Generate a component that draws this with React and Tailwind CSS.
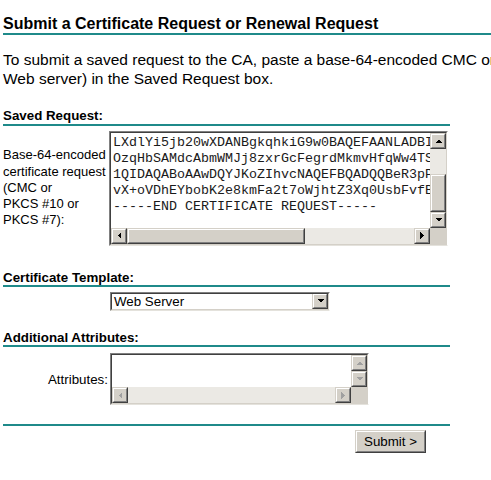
const teal = 'border-[#1f8a8a]'

function Arrow({ dir, disabled }) {
  const fill = disabled ? '#a0a0a0' : '#000'
  if (dir === 'up' || dir === 'down') {
    const pts = dir === 'up' ? '0,4 7,4 3.5,0.5' : '0,0 7,0 3.5,3.5'
    return (
      <svg width="7" height="4" viewBox="0 0 7 4" shapeRendering="crispEdges">
        <polygon points={pts} fill={fill} />
      </svg>
    )
  }
  const pts = dir === 'left' ? '4,0 4,7 0.5,3.5' : '0,0 0,7 3.5,3.5'
  return (
    <svg width="4" height="7" viewBox="0 0 4 7" shapeRendering="crispEdges">
      <polygon points={pts} fill={fill} />
    </svg>
  )
}

function Raised({ className = '', children }) {
  return (
    <div className={`border border-t-[#d4d0c8] border-l-[#d4d0c8] border-r-[#404040] border-b-[#404040] bg-[#d4d0c8] ${className}`}>
      <div className="w-full h-full border border-t-white border-l-white border-r-[#808080] border-b-[#808080] flex items-center justify-center">
        {children}
      </div>
    </div>
  )
}

function SbButton({ dir, disabled }) {
  return (
    <Raised className="w-4 h-4 shrink-0">
      <Arrow dir={dir} disabled={disabled} />
    </Raised>
  )
}

function Inset({ className = '', children }) {
  return (
    <div className={`border border-t-[#808080] border-l-[#808080] border-r-white border-b-[#e4e2dc] ${className}`}>
      <div className="w-full h-full border border-t-[#404040] border-l-[#404040] border-r-[#d4d0c8] border-b-[#d4d0c8] bg-white overflow-hidden">
        {children}
      </div>
    </div>
  )
}

const csr = [
  'LXdlYi5jb20wXDANBgkqhkiG9w0BAQEFAANLADBIAkEA',
  'OzqHbSAMdcAbmWMJj8zxrGcFegrdMkmvHfqWw4TS wQ',
  '1QIDAQABoAAwDQYJKoZIhvcNAQEFBQADQQBeR3pP.kB',
  'vX+oVDhEYbobK2e8kmFa2t7oWjhtZ3Xq0UsbFvfB.Q',
  '-----END CERTIFICATE REQUEST-----',
]

function RequestBox() {
  return (
    <Inset className="w-[339px] h-[115px] shrink-0">
      <div className="grid grid-cols-[1fr_16px] grid-rows-[1fr_16px] w-full h-full">
        <div className="overflow-hidden pl-[2px] pt-[2px] font-[Liberation_Mono,Courier_New,monospace] text-[13.33px] leading-[16px] whitespace-pre text-[#1a1a1a]">
          {csr.map((l, i) => (
            <div key={i}>{l}</div>
          ))}
        </div>
        <div className="flex flex-col">
          <SbButton dir="up" />
          <div className="flex-1 bg-[#ebe9e4] flex flex-col justify-end">
            <Raised className="h-[38px] w-4" />
          </div>
          <SbButton dir="down" />
        </div>
        <div className="flex">
          <SbButton dir="left" />
          <Raised className="w-[178px] h-4 shrink-0" />
          <div className="flex-1 bg-[#ebe9e4]" />
          <SbButton dir="right" />
        </div>
        <div className="bg-[#d4d0c8]" />
      </div>
    </Inset>
  )
}

function AttributesBox() {
  return (
    <Inset className="w-[259px] h-[52px] shrink-0">
      <div className="grid grid-cols-[1fr_16px] grid-rows-[1fr_16px] w-full h-full">
        <div />
        <div className="flex flex-col">
          <SbButton dir="up" disabled />
          <SbButton dir="down" disabled />
        </div>
        <div className="flex">
          <SbButton dir="left" disabled />
          <div className="flex-1 bg-[#ebe9e4]" />
          <SbButton dir="right" disabled />
        </div>
        <div className="bg-[#d4d0c8]" />
      </div>
    </Inset>
  )
}

function Heading({ className = '', children }) {
  return (
    <div className={`border-b-2 ${teal} text-[13.33px] font-bold leading-[15.33px] ${className}`}>
      {children}
    </div>
  )
}

export default function App() {
  return (
    <div className="w-full min-h-[480px] overflow-hidden bg-white pl-[3px] text-black font-[Liberation_Sans,Arial,sans-serif]">
      <div className={`mt-[15px] border-b-2 ${teal} text-[16px] font-bold leading-[18.4px] whitespace-nowrap`}>
        Submit a Certificate Request or Renewal Request
      </div>

      <p className="mt-[16px] text-[15.5px] leading-[18.4px] whitespace-nowrap">
        To submit a saved request to the CA, paste a base-64-encoded CMC or PKCS #10 certificate request or PKCS #7 renewal request generated by an external source (such as a
        <br />
        Web server) in the Saved Request box.
      </p>

      <div className="w-[447px]">
        <Heading className="mt-[20px]">Saved Request:</Heading>
        <div className="mt-[5px] flex items-center">
          <div className="w-[106px] shrink-0 text-[13px] leading-[16.3px] whitespace-nowrap">
            Base-64-encoded<br />
            certificate request<br />
            (CMC or<br />
            PKCS #10 or<br />
            PKCS #7):
          </div>
          <RequestBox />
        </div>

        <Heading className="mt-[24px]">Certificate Template:</Heading>
        <div className="mt-[5px] flex">
          <div className="w-[107px] shrink-0" />
          <Inset className="w-[220px] h-[19px]">
            <div className="flex items-center h-full">
              <div className="flex-1 pl-[2px] text-[13.33px] leading-[15px]">Web Server</div>
              <SbButton dir="down" />
            </div>
          </Inset>
        </div>

        <Heading className="mt-[19px]">Additional Attributes:</Heading>
        <div className="mt-[6px] flex items-center">
          <div className="w-[107px] shrink-0 pr-[2px] text-right text-[13.33px] leading-[15.33px]">Attributes:</div>
          <AttributesBox />
        </div>

        <div className={`mt-[19px] border-b-2 ${teal}`} />
        <div className="mt-[4px] flex justify-end pr-[24px]">
          <Raised className="w-[71px] h-[23px]">
            <span className="text-[13.33px] leading-none">Submit &gt;</span>
          </Raised>
        </div>
      </div>
    </div>
  )
}
